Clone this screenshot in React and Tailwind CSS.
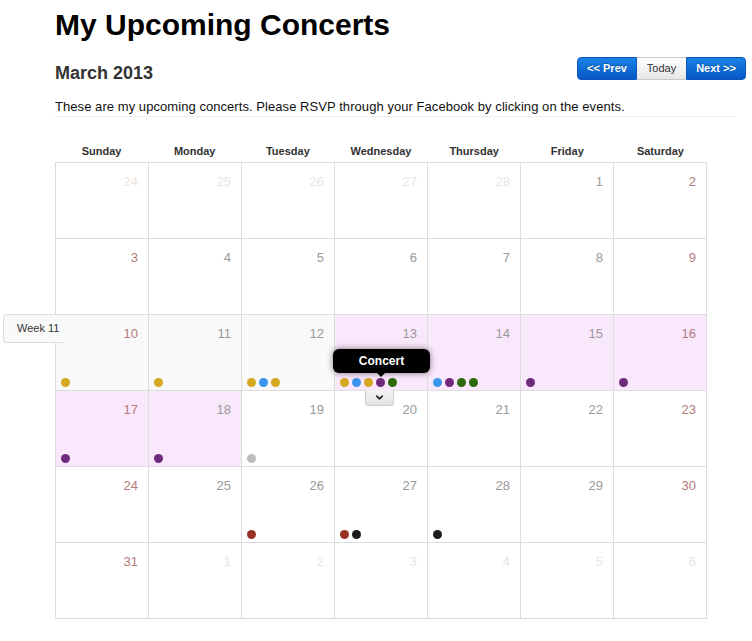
import React from 'react'
import { ChevronDown } from 'lucide-react'

const C = {
  gold: '#d4a81f',
  blue: '#3a96ec',
  purple: '#6f2a7c',
  green: '#2d6a08',
  grey: '#bcbcbc',
  red: '#993226',
  black: '#1b1b1b',
}

const weeks = [
  [
    { n: 24, other: true }, { n: 25, other: true }, { n: 26, other: true }, { n: 27, other: true },
    { n: 28, other: true }, { n: 1 }, { n: 2 },
  ],
  [{ n: 3 }, { n: 4 }, { n: 5 }, { n: 6 }, { n: 7 }, { n: 8 }, { n: 9 }],
  [
    { n: 10, bg: 'gray', dots: ['gold'] },
    { n: 11, bg: 'gray', dots: ['gold'] },
    { n: 12, bg: 'gray', dots: ['gold', 'blue', 'gold'] },
    { n: 13, bg: 'pink', dots: ['gold', 'blue', 'gold', 'purple', 'green'] },
    { n: 14, bg: 'pink', dots: ['blue', 'purple', 'green', 'green'] },
    { n: 15, bg: 'pink', dots: ['purple'] },
    { n: 16, bg: 'pink', dots: ['purple'] },
  ],
  [
    { n: 17, bg: 'pink', dots: ['purple'] },
    { n: 18, bg: 'pink', dots: ['purple'] },
    { n: 19, dots: ['grey'] },
    { n: 20 }, { n: 21 }, { n: 22 }, { n: 23 },
  ],
  [
    { n: 24 }, { n: 25 },
    { n: 26, dots: ['red'] },
    { n: 27, dots: ['red', 'black'] },
    { n: 28, dots: ['black'] },
    { n: 29 }, { n: 30 },
  ],
  [
    { n: 31 }, { n: 1, other: true }, { n: 2, other: true }, { n: 3, other: true },
    { n: 4, other: true }, { n: 5, other: true }, { n: 6, other: true },
  ],
]

const days = ['Sunday', 'Monday', 'Tuesday', 'Wednesday', 'Thursday', 'Friday', 'Saturday']

const Cell = ({ d, col }) => {
  const weekend = col === 0 || col === 6
  let numColor = weekend ? 'text-[#b57a7c]' : 'text-[#999]'
  if (d.other) numColor = col === 0 ? 'text-[#f1e0e0]' : 'text-[#e6e6e6]'
  const bg = d.bg === 'pink' ? 'bg-[#f9e7fb]' : d.bg === 'gray' ? 'bg-[#f9f9f9]' : 'bg-white'
  return (
    <div className={`h-[76px] border-r border-b border-[#ddd] flex flex-col justify-between ${bg}`}>
      <div className={`text-right pr-[10px] pt-[10px] text-[13px] leading-[18px] ${numColor}`}>{d.n}</div>
      <div className="flex gap-[3px] pl-[5px] pb-[3px]">
        {(d.dots || []).map((c, i) => (
          <span key={i} className="w-[9px] h-[9px] rounded-full" style={{ background: C[c] }}></span>
        ))}
      </div>
    </div>
  )
}

export default function App() {
  return (
    <div className="min-h-screen bg-white pl-[55px] pr-[6px] font-['Liberation_Sans',Arial,sans-serif]">
      <h1 className="pt-[7px] text-[30px] leading-[36px] font-bold text-black">My Upcoming Concerts</h1>

      <div className="flex justify-between">
        <h2 className="mt-[18px] text-[18px] leading-[24px] font-bold text-[#333]">March 2013</h2>
        <div className="mt-[14px] flex h-[23px] text-[11px]">
          <button className="w-[60px] rounded-l-[4px] border border-[#0a55b8] bg-gradient-to-b from-[#1b82e4] to-[#0757c6] text-white font-bold [text-shadow:0_-1px_0_rgba(0,0,0,0.25)]">
            &lt;&lt; Prev
          </button>
          <button className="w-[49px] border-y border-[#c8c8c8] bg-gradient-to-b from-[#ffffff] to-[#e6e6e6] text-[#333]">
            Today
          </button>
          <button className="w-[60px] rounded-r-[4px] border border-[#0a55b8] bg-gradient-to-b from-[#1b82e4] to-[#0757c6] text-white font-bold [text-shadow:0_-1px_0_rgba(0,0,0,0.25)]">
            Next &gt;&gt;
          </button>
        </div>
      </div>

      <p className="mt-[13px] w-[680px] border-b border-[#eee] text-[13px] tracking-[0.06px] leading-[18px] text-[#111]">
        These are my upcoming concerts. Please RSVP through your Facebook by clicking on the events.
      </p>

      <div className="mt-[23px] w-[652px] grid grid-cols-7 h-[22px] items-center">
        {days.map((d) => (
          <div key={d} className="text-center text-[11px] font-bold text-[#333]">{d}</div>
        ))}
      </div>

      <div className="relative w-[652px]">
        <div className="grid grid-cols-7 border-t border-l border-[#ddd]">
          {weeks.map((w, r) => w.map((d, c) => <Cell key={`${r}-${c}`} d={d} col={c} />))}
        </div>

        <div className="absolute left-[-52px] top-[152px] w-[60px] h-[29px] flex items-center pl-[13px] rounded-l-[4px] border border-r-0 border-[#ddd] bg-[#f9f9f9] text-[11px] text-[#333]">
          Week 11
        </div>

        <div className="absolute left-[278px] top-[187px] w-[97px] h-[24px] rounded-[6px] bg-black shadow-[0_0_6px_rgba(0,0,0,0.5)] flex items-center justify-center text-white text-[12px] font-bold">
          Concert
          <span className="absolute left-[44px] bottom-[-4px] w-0 h-0 border-x-[4px] border-x-transparent border-t-[4px] border-t-black"></span>
        </div>

        <div className="absolute left-[310px] top-[228px] w-[29px] h-[16px] rounded-b-[4px] border border-t-0 border-[#ccc] bg-gradient-to-b from-[#f4f4f4] to-[#e4e4e4] flex items-center justify-center text-[#222]">
          <ChevronDown size={11} strokeWidth={3.5} />
        </div>
      </div>
    </div>
  )
}
